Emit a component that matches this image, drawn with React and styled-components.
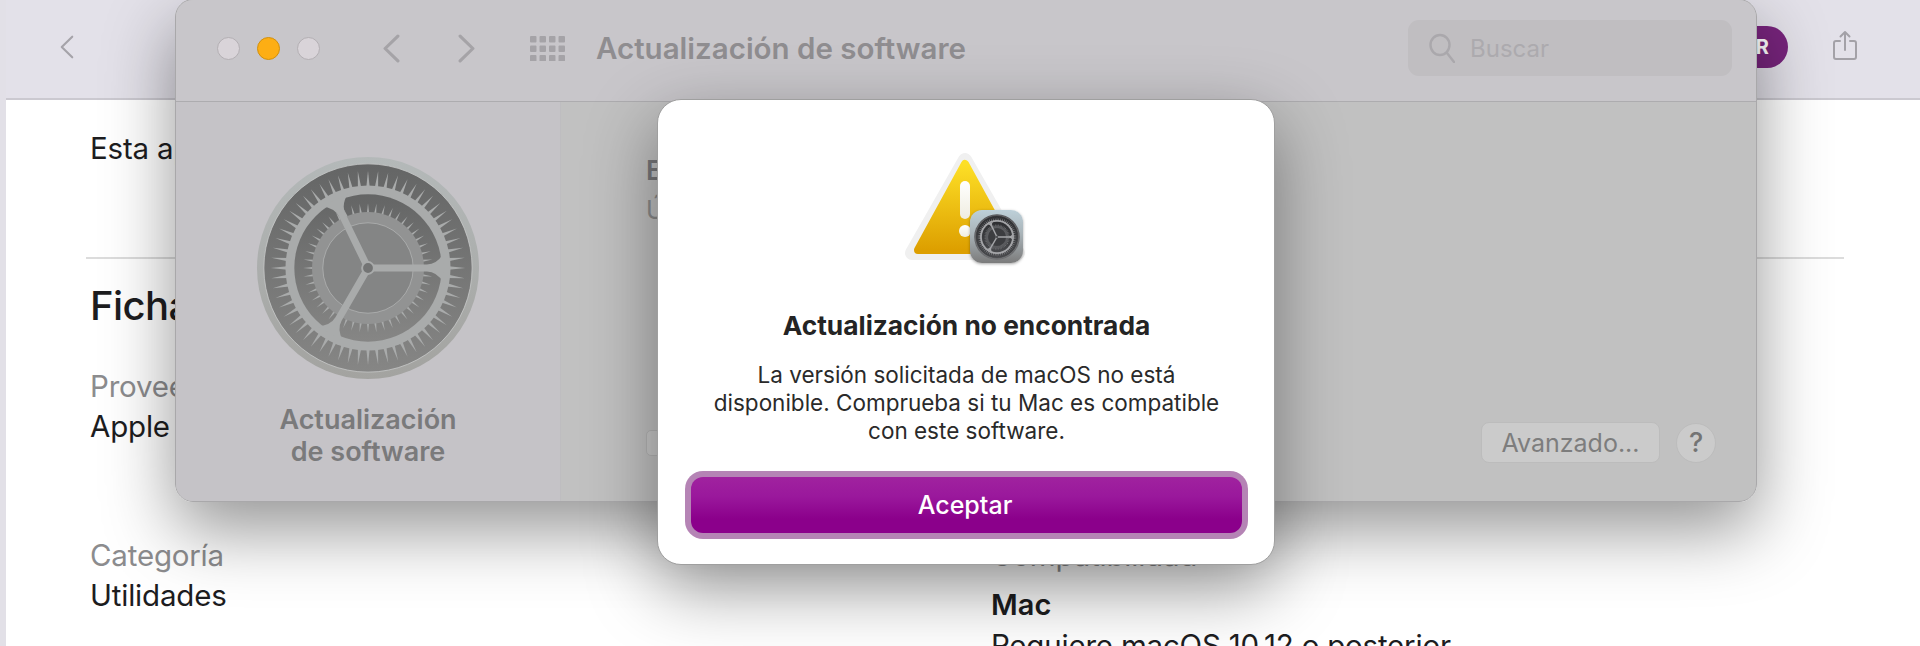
import React from "react";
import styled, { createGlobalStyle } from "styled-components";

const GlobalStyle = createGlobalStyle`
  html, body {
    margin: 0;
    height: 646px;
    overflow: hidden;
    background: #fff;
    font-family: "Inter", "Liberation Sans", sans-serif;
  }
`;

const range = (n) => Array.from({ length: n }, (_, i) => i);

const polar = (r, deg) => {
  const a = (deg * Math.PI) / 180;
  return [r * Math.cos(a), r * Math.sin(a)];
};

const wedge = (inner, outer, deg, half) => {
  const [ax, ay] = polar(inner, deg - half);
  const [bx, by] = polar(outer, deg);
  const [cx, cy] = polar(inner, deg + half);
  return `${ax},${ay} ${bx},${by} ${cx},${cy}`;
};

const softGear = {
  rimTop: "#b4b9b9",
  rimBottom: "#a3a3a0",
  wellTop: "#646565",
  wellBottom: "#868685",
  metal: "#a9abab",
  ring: "#929393",
  disc: "#848585",
  hub: "#737474",
  edge: "#c9cbcb",
};

const badgeGear = {
  rimTop: "#55565a",
  rimBottom: "#6c6d70",
  wellTop: "#2d2e31",
  wellBottom: "#48494c",
  metal: "#a4a5a8",
  ring: "#5a5b5e",
  disc: "#3c3d40",
  hub: "#2c2d30",
  edge: "#d6d7d9",
};

const Gear = ({ id, size, colors }) => (
  <svg width={size} height={size} viewBox="-114 -114 228 228">
    <defs>
      <linearGradient id={`${id}-rim`} x1="0" y1="0" x2="0" y2="1">
        <stop offset="0" stopColor={colors.rimTop} />
        <stop offset="1" stopColor={colors.rimBottom} />
      </linearGradient>
      <linearGradient id={`${id}-well`} x1="0" y1="0" x2="0" y2="1">
        <stop offset="0" stopColor={colors.wellTop} />
        <stop offset="1" stopColor={colors.wellBottom} />
      </linearGradient>
    </defs>
    <circle r="113" fill={`url(#${id}-rim)`} />
    <circle r="106" fill={`url(#${id}-well)`} stroke={colors.edge} strokeWidth="0.8" />
    {range(60).map((i) => (
      <polygon key={i} points={wedge(80, 99, i * 6, 1.4)} fill={colors.metal} />
    ))}
    <circle r="84" fill={colors.metal} />
    <circle r="75" fill={`url(#${id}-well)`} />
    {range(48).map((i) => (
      <polygon key={i} points={wedge(54, 66, i * 7.5, 1.4)} fill={colors.metal} />
    ))}
    <circle r="57" fill={colors.ring} />
    <circle r="46" fill={colors.disc} stroke={colors.edge} strokeWidth="0.5" />
    {[0, -116, 120].map((deg) => (
      <path
        key={deg}
        transform={`rotate(${deg})`}
        d="M0 -3.6 L60 -3.6 Q70 -3.6 77 -15 L77 15 Q70 3.6 60 3.6 L0 3.6 Z"
        fill={colors.metal}
      />
    ))}
    <circle r="6" fill={colors.hub} stroke={colors.metal} strokeWidth="2" />
  </svg>
);

const Chevron = ({ left, width, height, color, stroke }) => (
  <svg width={width} height={height} viewBox="0 0 16 28" fill="none" preserveAspectRatio="none">
    <polyline
      points={left ? "14,2 2,14 14,26" : "2,2 14,14 2,26"}
      stroke={color}
      strokeWidth={stroke}
      strokeLinecap="round"
      strokeLinejoin="round"
    />
  </svg>
);

const Shell = styled.div`
  width: 1920px;
  height: 646px;
  display: flex;
  overflow: hidden;
  position: relative;
`;

const EdgeStrip = styled.div`
  width: 6px;
  flex: none;
  background: #e2e0e7;
`;

const Store = styled.div`
  flex: 1;
  min-width: 0;
  display: flex;
  flex-direction: column;
`;

const StoreBar = styled.header`
  height: 100px;
  flex: none;
  display: flex;
  align-items: center;
  justify-content: space-between;
  padding: 0 63px 4px 54px;
  box-sizing: border-box;
  background: #e3e1e9;
  border-bottom: 2px solid #cbc9d0;
`;

const StoreActions = styled.div`
  display: flex;
  align-items: center;
  gap: 45px;
`;

const ShareIcon = styled.svg`
  margin-top: -4px;
`;

const GetPill = styled.span`
  height: 42px;
  display: flex;
  align-items: center;
  padding: 0 19px 0 14px;
  border-radius: 21px;
  background: #77247c;
  color: #fff;
  font-size: 20px;
  font-weight: 700;
`;

const StoreBody = styled.main`
  padding: 31px 76px 0 84px;
  color: #1d1d1f;
`;

const Lead = styled.p`
  margin: 0;
  width: fit-content;
  font-size: 29.5px;
  line-height: 34px;
  letter-spacing: -0.2px;
`;

const Rule = styled.hr`
  margin: 92px 0 0 -4px;
  height: 2px;
  border: 0;
  background: #dcdcdc;
`;

const SectionTitle = styled.h2`
  margin: 24px 0 0;
  width: fit-content;
  font-size: 40px;
  line-height: 46px;
  font-weight: 500;
  letter-spacing: -0.6px;
`;

const FactGrid = styled.div`
  margin-top: 40px;
  display: grid;
  grid-template-columns: 901px 1fr;
  grid-auto-rows: 169px;
`;

const FactLabel = styled.div`
  width: fit-content;
  font-size: 29.5px;
  line-height: 34px;
  color: #8c8c8e;
  letter-spacing: -0.2px;
`;

const FactValue = styled.div`
  margin-top: 6px;
  width: fit-content;
  font-size: 29.5px;
  line-height: 34px;
  letter-spacing: -0.2px;
`;

const FactHeading = styled.div`
  margin-top: 16px;
  width: fit-content;
  font-size: 29px;
  line-height: 34px;
  font-weight: 600;
`;

const Window = styled.section`
  position: absolute;
  left: 175px;
  top: -1px;
  width: 1582px;
  height: 503px;
  box-sizing: border-box;
  display: flex;
  flex-direction: column;
  border: 1px solid #a9a8aa;
  border-radius: 18px;
  overflow: hidden;
  background: #c1c1c1;
`;

const WindowShadow = styled.div`
  position: absolute;
  left: 175px;
  top: -1px;
  width: 1582px;
  height: 503px;
  border-radius: 18px;
  box-shadow: 0 28px 70px rgba(0, 0, 0, 0.42);
`;

const TitleBar = styled.div`
  height: 102px;
  flex: none;
  box-sizing: border-box;
  display: flex;
  align-items: center;
  padding: 0 24px 5px 41px;
  background: #c8c6ca;
  border-bottom: 1px solid #adacaf;
`;

const Lights = styled.div`
  display: flex;
  gap: 17px;
  margin-right: 63px;
`;

const Light = styled.span`
  width: 23px;
  height: 23px;
  box-sizing: border-box;
  border-radius: 50%;
  background: ${(p) => (p.$on ? "#fdae14" : "#d9d4d9")};
  border: 1px solid ${(p) => (p.$on ? "#d2900c" : "#b3afb3")};
`;

const NavArrows = styled.div`
  display: flex;
  gap: 58px;
  margin-right: 55px;
`;

const WindowTitle = styled.h1`
  margin: 0 0 0 31px;
  font-size: 29.5px;
  line-height: 34px;
  font-weight: 600;
  color: #8f8d90;
  white-space: nowrap;
`;

const Search = styled.div`
  margin-left: auto;
  width: 324px;
  height: 56px;
  flex: none;
  display: flex;
  align-items: center;
  gap: 15px;
  padding-left: 21px;
  box-sizing: border-box;
  border-radius: 11px;
  background: #c0bec1;
  color: #acaaae;
  font-size: 24px;
`;

const WindowBody = styled.div`
  flex: 1;
  display: flex;
  min-height: 0;
`;

const Sidebar = styled.aside`
  width: 385px;
  flex: none;
  box-sizing: border-box;
  display: flex;
  flex-direction: column;
  align-items: center;
  padding-top: 54px;
  background: #c5c3c7;
  border-right: 1px solid #bebdc0;
`;

const SidebarLabel = styled.div`
  margin-top: 24px;
  text-align: center;
  font-size: 27px;
  line-height: 32px;
  font-weight: 600;
  color: #7a7a7b;
`;

const Pane = styled.div`
  flex: 1;
  display: flex;
  flex-direction: column;
  justify-content: space-between;
  padding: 54px 40px 38px 85px;
`;

const StatusTitle = styled.div`
  font-size: 27px;
  line-height: 30px;
  font-weight: 600;
  color: #77777a;
`;

const StatusNote = styled.div`
  margin-top: 9px;
  font-size: 25px;
  line-height: 30px;
  color: #8b8b8b;
`;

const PaneFooter = styled.div`
  display: flex;
  align-items: center;
  gap: 16px;
`;

const AutoCheck = styled.span`
  width: 26px;
  height: 26px;
  box-sizing: border-box;
  margin-right: auto;
  border-radius: 5px;
  background: #c9c9c9;
  border: 1px solid #b5b5b5;
`;

const AdvancedButton = styled.button`
  width: 179px;
  height: 41px;
  padding: 0;
  border: 1px solid #bcbcbc;
  border-radius: 8px;
  background: #cbcbcb;
  color: #7d7d7d;
  font: 400 25px "Inter", sans-serif;
`;

const HelpButton = styled.button`
  width: 40px;
  height: 40px;
  padding: 0;
  border: 1px solid #bcbcbc;
  border-radius: 50%;
  background: #cbcbcb;
  color: #747474;
  font: 500 27px "Inter", sans-serif;
`;

const Alert = styled.div`
  position: absolute;
  left: 657px;
  top: 99px;
  width: 618px;
  height: 466px;
  box-sizing: border-box;
  display: flex;
  flex-direction: column;
  align-items: center;
  padding: 52px 26px 25px 27px;
  background: #fff;
  border: 1px solid #9f9f9f;
  border-radius: 24px;
  box-shadow: 0 24px 70px rgba(0, 0, 0, 0.4);
`;

const AlertIcon = styled.div`
  position: relative;
  width: 120px;
  height: 112px;
  margin-left: -3px;
  flex: none;
`;

const GearBadge = styled.div`
  position: absolute;
  left: 65px;
  top: 58px;
  width: 53px;
  height: 53px;
  display: flex;
  align-items: center;
  justify-content: center;
  border-radius: 12px;
  background: linear-gradient(#bdd0d9 0%, #a9b3b8 45%, #7b7b7b 100%);
  box-shadow: 0 1px 3px rgba(0, 0, 0, 0.35);
`;

const AlertTitle = styled.h3`
  margin: 47px 0 0;
  font-size: 26.3px;
  line-height: 30px;
  font-weight: 700;
  color: #242424;
  white-space: nowrap;
`;

const AlertText = styled.p`
  margin: 20px 0 0;
  width: 510px;
  text-align: center;
  font-size: 22.5px;
  line-height: 28px;
  color: #2a2a2a;
`;

const AcceptRing = styled.div`
  margin-top: auto;
  width: 100%;
  height: 68px;
  box-sizing: border-box;
  padding: 6px;
  border-radius: 18px;
  background: #b584b5;
`;

const AcceptButton = styled.button`
  width: 100%;
  height: 100%;
  padding: 0 3px 0 0;
  border: 0;
  border-radius: 12px;
  background: linear-gradient(#a0229f 0%, #9a189c 35%, #8b008b 75%);
  color: #fff;
  font: 500 25px "Inter", sans-serif;
`;

const WarningTriangle = () => (
  <svg width="120" height="112" viewBox="0 0 120 112">
    <defs>
      <linearGradient id="warn-fill" x1="0" y1="0" x2="0" y2="1">
        <stop offset="0" stopColor="#fddf26" />
        <stop offset="1" stopColor="#dd9f00" />
      </linearGradient>
      <linearGradient id="warn-mark" x1="0" y1="0" x2="0" y2="1">
        <stop offset="0" stopColor="#ffffff" />
        <stop offset="1" stopColor="#efece0" />
      </linearGradient>
    </defs>
    <path
      d="M60 8 L113 101 H7 Z"
      fill="#f0f0f0"
      stroke="#f0f0f0"
      strokeWidth="14"
      strokeLinejoin="round"
    />
    <path
      d="M60 12 L107 98 H13 Z"
      fill="url(#warn-fill)"
      stroke="url(#warn-fill)"
      strokeWidth="8"
      strokeLinejoin="round"
    />
    <rect x="55" y="29" width="10" height="38" rx="5" fill="url(#warn-mark)" />
    <circle cx="60" cy="79" r="6" fill="url(#warn-mark)" />
  </svg>
);

const App = () => (
  <>
    <GlobalStyle />
    <Shell>
      <EdgeStrip />
      <Store>
        <StoreBar>
          <Chevron left width={14} height={24} color="#a5a3a9" stroke={2.4} />
          <StoreActions>
            <GetPill>OBTENER</GetPill>
            <ShareIcon width="24" height="30" viewBox="0 0 24 30" fill="none" stroke="#a3a1a7" strokeWidth="2" strokeLinecap="round" strokeLinejoin="round">
              <path d="M7 11 H3 a2 2 0 0 0 -2 2 V27 a2 2 0 0 0 2 2 H21 a2 2 0 0 0 2 -2 V13 a2 2 0 0 0 -2 -2 H17" />
              <path d="M12 20 V2 M7.5 6.5 L12 2 L16.5 6.5" />
            </ShareIcon>
          </StoreActions>
        </StoreBar>
        <StoreBody>
          <Lead>Esta app mantiene tu Mac actualizado.</Lead>
          <Rule />
          <SectionTitle>Ficha técnica</SectionTitle>
          <FactGrid>
            <div>
              <FactLabel>Proveedor</FactLabel>
              <FactValue>Apple</FactValue>
            </div>
            <div>
              <FactLabel>Tamaño</FactLabel>
              <FactValue>12,2 GB</FactValue>
            </div>
            <div>
              <FactLabel>Categoría</FactLabel>
              <FactValue>Utilidades</FactValue>
            </div>
            <div>
              <FactLabel>Compatibilidad</FactLabel>
              <FactHeading>Mac</FactHeading>
              <FactValue>Requiere macOS 10.12 o posterior</FactValue>
            </div>
          </FactGrid>
        </StoreBody>
      </Store>

      <WindowShadow />
      <Window>
        <TitleBar>
          <Lights>
            <Light />
            <Light $on />
            <Light />
          </Lights>
          <NavArrows>
            <Chevron left width={17} height={29} color="#a5a3a7" stroke={3} />
            <Chevron width={17} height={29} color="#a5a3a7" stroke={3} />
          </NavArrows>
          <svg width="35" height="25" viewBox="0 0 35 25" fill="#a5a3a7">
            {range(12).map((i) => (
              <rect key={i} x={(i % 4) * 9.5} y={Math.floor(i / 4) * 9.5} width="6.5" height="6.5" rx="1" />
            ))}
          </svg>
          <WindowTitle>Actualización de software</WindowTitle>
          <Search>
            <svg width="26" height="30" viewBox="0 0 26 30" fill="none" stroke="#aaa8ac" strokeWidth="2.4" strokeLinecap="round">
              <ellipse cx="11" cy="12" rx="9.5" ry="10" />
              <path d="M18 20 L25 29" />
            </svg>
            <span>Buscar</span>
          </Search>
        </TitleBar>
        <WindowBody>
          <Sidebar>
            <Gear id="pref" size={224} colors={softGear} />
            <SidebarLabel>
              Actualización
              <br />
              de software
            </SidebarLabel>
          </Sidebar>
          <Pane>
            <div>
              <StatusTitle>Este Mac está actualizado</StatusTitle>
              <StatusNote>Última comprobación: hoy</StatusNote>
            </div>
            <PaneFooter>
              <AutoCheck />
              <AdvancedButton>Avanzado...</AdvancedButton>
              <HelpButton>?</HelpButton>
            </PaneFooter>
          </Pane>
        </WindowBody>
      </Window>

      <Alert>
        <AlertIcon>
          <WarningTriangle />
          <GearBadge>
            <Gear id="badge" size={46} colors={badgeGear} />
          </GearBadge>
        </AlertIcon>
        <AlertTitle>Actualización no encontrada</AlertTitle>
        <AlertText>
          La versión solicitada de macOS no está disponible. Comprueba si tu Mac es compatible con este software.
        </AlertText>
        <AcceptRing>
          <AcceptButton>Aceptar</AcceptButton>
        </AcceptRing>
      </Alert>
    </Shell>
  </>
);

export default App;
